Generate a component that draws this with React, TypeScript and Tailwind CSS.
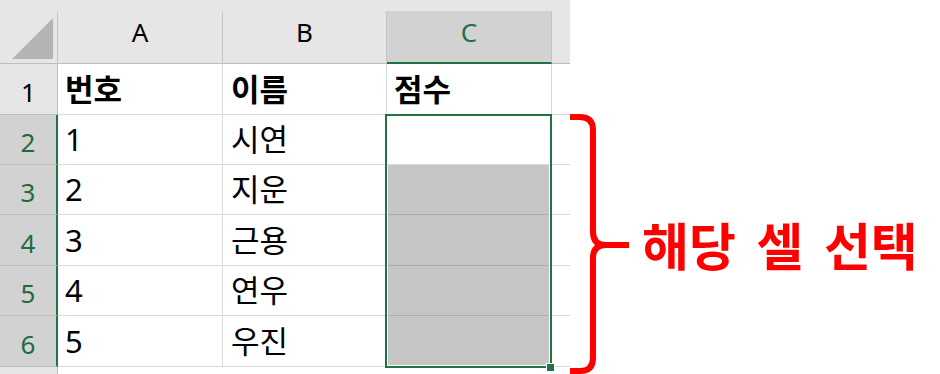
import React from 'react';

const rows = [
  { n: 1, a: '번호', b: '이름', c: '점수', h: 'h-[51px]', head: true },
  { n: 2, a: '1', b: '시연', c: '', h: 'h-[50px]', head: false },
  { n: 3, a: '2', b: '지운', c: '', h: 'h-[50px]', head: false },
  { n: 4, a: '3', b: '근용', c: '', h: 'h-[51px]', head: false },
  { n: 5, a: '4', b: '연우', c: '', h: 'h-[50px]', head: false },
  { n: 6, a: '5', b: '우진', c: '', h: 'h-[51px]', head: false },
];

const Sheet: React.FC = () => (
  <div className="relative w-[570px] shrink-0 bg-[#e6e6e6] font-['Noto_Sans','Noto_Sans_CJK_KR',sans-serif] text-black">
    {/* Column headers */}
    <div className="flex h-[64px] items-end">
      <div className="relative h-[53px] w-[58px] border-r border-b border-[#c4c4c4] border-b-[#bdbdbd]">
        <svg className="absolute left-0 top-0" width="58" height="53" viewBox="0 0 58 53">
          <polygon points="12,48 53,7 53,48" fill="#b4b4b4" />
        </svg>
      </div>
      <div className="flex h-[53px] w-[165px] items-center justify-center border-r border-b border-[#c4c4c4] border-b-[#bdbdbd] pb-[10px] text-[26px] leading-none">
        A
      </div>
      <div className="flex h-[53px] w-[164px] items-center justify-center border-r border-b border-[#c4c4c4] border-b-[#bdbdbd] pb-[10px] text-[26px] leading-none">
        B
      </div>
      <div className="flex h-[53px] w-[165px] items-center justify-center border-r border-[#c4c4c4] border-b-2 border-b-[#217346] bg-[#d2d2d2] pb-[9px] text-[26px] leading-none text-[#217346]">
        C
      </div>
      <div className="h-[53px] flex-1 border-b border-[#bdbdbd]" />
    </div>

    {/* Body rows */}
    {rows.map((r) => {
      const picked = !r.head;
      const shaded = r.n >= 3;
      return (
        <div key={r.n} className={`flex ${r.h}`}>
          <div
            className={
              picked
                ? 'flex w-[58px] items-center justify-center border-b border-[#bdbdbd] border-r-2 border-r-[#217346] bg-[#d2d2d2] pt-[5px] text-[26px] leading-none text-[#1e6b40]'
                : 'flex w-[58px] items-center justify-center border-b border-r border-[#bdbdbd] bg-[#e6e6e6] pt-[5px] text-[26px] leading-none'
            }
          >
            {r.n}
          </div>
          <div
            className={`flex w-[165px] items-center border-r border-b border-[#dadada] bg-white pl-[7px] text-[31px] leading-none ${
              r.head ? 'font-bold' : ''
            }`}
          >
            {r.a}
          </div>
          <div
            className={`flex w-[164px] items-center border-r border-b border-[#dadada] bg-white pl-[8px] text-[31px] leading-none ${
              r.head ? 'font-bold' : ''
            }`}
          >
            {r.b}
          </div>
          <div
            className={
              shaded
                ? 'w-[165px] border-r border-b border-[#adadad] bg-[#c6c6c6]'
                : `flex w-[165px] items-center border-r border-b border-[#dadada] bg-white pl-[7px] text-[31px] leading-none ${
                    r.head ? 'font-bold' : ''
                  }`
            }
          >
            {r.c}
          </div>
          <div className="flex-1 border-b border-[#dadada] bg-white" />
        </div>
      );
    })}

    {/* Row 7, cut off by the window */}
    <div className="flex h-[50px]">
      <div className="w-[58px] border-r border-[#bdbdbd] bg-[#e6e6e6]" />
      <div className="flex-1 bg-white" />
    </div>

    {/* Selection C2:C6 */}
    <div className="pointer-events-none absolute left-[385px] top-[114px] h-[254px] w-[167px] border-2 border-[#217346] shadow-[inset_0_0_0_1px_#ffffff]" />
    <div className="absolute left-[546px] top-[363px] h-[9px] w-[9px] border border-white bg-[#217346]" />
  </div>
);

const App: React.FC = () => {
  return (
    <div className="flex h-[374px] w-[940px] overflow-hidden bg-white">
      <Sheet />

      {/* Annotation */}
      <div className="flex items-start">
        <svg
          className="-ml-[14px] mt-[112px] shrink-0"
          width="80"
          height="262"
          viewBox="0 0 80 262"
          fill="none"
        >
          <path
            d="M0 5 L24 5 Q37 5 37 18 L37 120 Q37 133 50 133 L73 133 M50 133 Q37 133 37 146 L37 246 Q37 259 24 259 L0 259"
            stroke="#ff0000"
            strokeWidth="6"
          />
        </svg>
        <div className="ml-[6px] mt-[219px] whitespace-nowrap font-['Noto_Sans_CJK_KR',sans-serif] text-[51px] font-bold leading-none text-[#ff0000] [word-spacing:9px]">
          해당 셀 선택
        </div>
      </div>
    </div>
  );
};

export default App;
